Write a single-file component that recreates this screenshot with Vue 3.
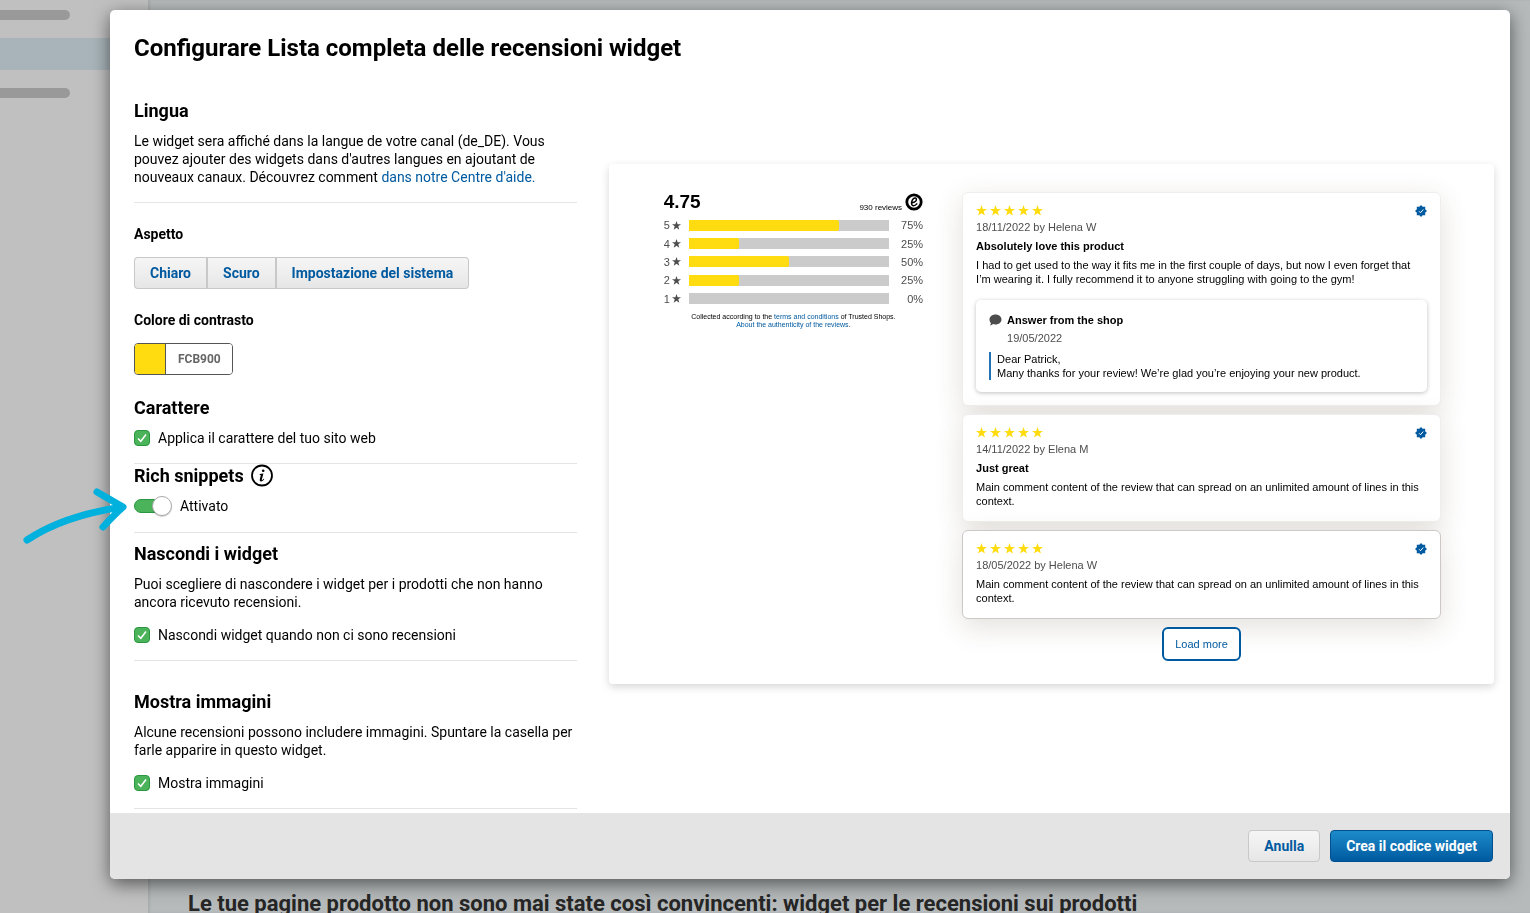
<script setup>
import { ref } from 'vue'

const aspetti = ['Chiaro', 'Scuro', 'Impostazione del sistema']
const aspetto = ref('Chiaro')
const colore = ref('FCB900')
const carattere = ref(true)
const richSnippets = ref(true)
const nascondi = ref(true)
const immagini = ref(true)

const voti = [
  { stelle: 5, percento: 75 },
  { stelle: 4, percento: 25 },
  { stelle: 3, percento: 50 },
  { stelle: 2, percento: 25 },
  { stelle: 1, percento: 0 },
]

const recensioni = [
  {
    id: 1,
    autore: '18/11/2022 by Helena W',
    titolo: 'Absolutely love this product',
    testo: 'I had to get used to the way it fits me in the first couple of days, but now I even forget that I’m wearing it. I fully recommend it to anyone struggling with going to the gym!',
    risposta: {
      data: '19/05/2022',
      saluto: 'Dear Patrick,',
      testo: 'Many thanks for your review! We’re glad you’re enjoying your new product.',
    },
  },
  {
    id: 2,
    autore: '14/11/2022 by Elena M',
    titolo: 'Just great',
    testo: 'Main comment content of the review that can spread on an unlimited amount of lines in this context.',
  },
  {
    id: 3,
    autore: '18/05/2022 by Helena W',
    testo: 'Main comment content of the review that can spread on an unlimited amount of lines in this context.',
    attiva: true,
  },
]
</script>

<template>
  <div class="pagina">
    <aside class="laterale">
      <span class="voce"></span>
      <span class="voce-attiva"></span>
      <span class="voce"></span>
    </aside>
    <main class="contenuto">
      <h1>Le tue pagine prodotto non sono mai state così convincenti: widget per le recensioni sui prodotti</h1>
    </main>
  </div>

  <div class="sfondo">
    <section class="modale" role="dialog" aria-labelledby="titolo-modale">
      <h2 id="titolo-modale" class="titolo-modale">Configurare Lista completa delle recensioni widget</h2>

      <div class="corpo">
        <div class="impostazioni">
          <section class="gruppo">
            <h3>Lingua</h3>
            <p>
              Le widget sera affiché dans la langue de votre canal (de_DE). Vous pouvez ajouter des widgets dans
              d'autres langues en ajoutant de nouveaux canaux. Découvrez comment
              <a href="#">dans notre Centre d'aide.</a>
            </p>
          </section>

          <section class="gruppo aspetto">
            <h4>Aspetto</h4>
            <div class="segmenti">
              <button v-for="voce in aspetti" :key="voce" type="button" @click="aspetto = voce">{{ voce }}</button>
            </div>

            <h4><label for="colore">Colore di contrasto</label></h4>
            <div class="colore">
              <span class="campione"></span>
              <input id="colore" v-model="colore" type="text" maxlength="6" />
            </div>

            <h3>Carattere</h3>
            <label class="opzione">
              <input v-model="carattere" type="checkbox" />
              Applica il carattere del tuo sito web
            </label>
          </section>

          <section class="gruppo">
            <h3 class="con-icona">
              Rich snippets
              <svg width="24" height="24" viewBox="0 0 24 24">
                <circle cx="12" cy="11.5" r="10" fill="none" stroke="#000" stroke-width="1.8" />
                <circle cx="13.2" cy="6.8" r="1.3" />
                <path d="M9.7 10.1 13.4 9.5 11.9 15.3Q11.600 16.400 12.200 16.200 12.900 15.800 13.600 14.800L14.200 15.200Q12.700 17.600 11 17.600 9.200 17.600 9.800 15.300L10.800 11.200Q10.900 10.700 9.600 10.700Z" />
              </svg>
            </h3>
            <label class="interruttore">
              <input v-model="richSnippets" type="checkbox" role="switch" />
              Attivato
            </label>
          </section>

          <section class="gruppo nascondi">
            <h3>Nascondi i widget</h3>
            <p>Puoi scegliere di nascondere i widget per i prodotti che non hanno ancora ricevuto recensioni.</p>
            <label class="opzione">
              <input v-model="nascondi" type="checkbox" />
              Nascondi widget quando non ci sono recensioni
            </label>
          </section>

          <section class="gruppo immagini">
            <h3>Mostra immagini</h3>
            <p>Alcune recensioni possono includere immagini. Spuntare la casella per farle apparire in questo widget.</p>
            <label class="opzione">
              <input v-model="immagini" type="checkbox" />
              Mostra immagini
            </label>
          </section>
        </div>

        <div class="anteprima">
          <div class="riepilogo">
            <div class="media">
              <strong>4.75</strong>
              <span class="totale">930 reviews</span>
              <svg width="18" height="18" viewBox="0 0 18 18">
                <circle cx="9" cy="9" r="7.2" fill="#fff" stroke="#000" stroke-width="2.8" />
                <path d="M7.3 9.8C9.8 9.2 11.6 7.8 11.4 6.1 11.2 4.2 8.6 4.7 7.3 7.2 6 9.8 6.4 12.5 8.3 12.7 9.7 12.8 10.9 12 11.8 10.9" fill="none" stroke="#000" stroke-width="1.5" stroke-linecap="round" />
              </svg>
            </div>
            <div class="voti">
              <div v-for="voto in voti" :key="voto.stelle" class="voto">
                <span class="numero">
                  {{ voto.stelle }}
                  <svg width="9" height="9" viewBox="0 0 24 24">
                    <path d="M12 0 15 8.6 24 8.9 16.8 14.3 19.4 23 12 17.9 4.6 23 7.2 14.3 0 8.9 9 8.6Z" fill="#4d4d4d" />
                  </svg>
                </span>
                <span class="barra"><span class="pieno" :style="{ width: voto.percento + '%' }"></span></span>
                <span class="percento">{{ voto.percento }}%</span>
              </div>
            </div>
            <p class="note">
              Collected according to the <a href="#">terms and conditions</a> of Trusted Shops.<br />
              <a href="#">About the authenticity of the reviews</a>.
            </p>
          </div>

          <div class="recensioni">
            <article v-for="r in recensioni" :key="r.id" class="recensione" :class="{ attiva: r.attiva }">
              <div class="testata">
                <span class="stelle">
                  <svg v-for="n in 5" :key="n" width="11" height="11" viewBox="0 0 24 24">
                    <path d="M12 0 15 8.6 24 8.9 16.8 14.3 19.4 23 12 17.9 4.6 23 7.2 14.3 0 8.9 9 8.6Z" fill="#ffdc0f" />
                  </svg>
                </span>
                <svg width="12" height="12" viewBox="0 0 24 24">
                  <path d="M12 0 15.4 3.700 20.500 3.500 20.300 8.600 24 12 20.300 15.400 20.500 20.500 15.400 20.300 12 24 8.600 20.300 3.500 20.500 3.700 15.400 0 12 3.700 8.600 3.500 3.500 8.600 3.700Z" fill="#005aa0" />
                  <path d="m8 12.500 3 3 5.500-6.500" fill="none" stroke="#fff" stroke-width="2" />
                </svg>
              </div>
              <p class="autore">{{ r.autore }}</p>
              <h5 v-if="r.titolo">{{ r.titolo }}</h5>
              <p class="testo">{{ r.testo }}</p>
              <div v-if="r.risposta" class="risposta">
                <div class="risposta-titolo">
                  <svg width="13" height="12" viewBox="0 0 26 24">
                    <path d="M13 1C20 1 25 5.300 25 11S20 21 13 21C11 21 9.500 20.700 8 20.200 6.500 21.800 4.300 22.800 2 23 3.200 21.500 3.800 19.700 3.700 18 2 16.200 1 13.700 1 11 1 5.300 6 1 13 1Z" fill="#4d4d4d" />
                  </svg>
                  <h5>Answer from the shop</h5>
                </div>
                <p class="risposta-data">{{ r.risposta.data }}</p>
                <blockquote>{{ r.risposta.saluto }}<br />{{ r.risposta.testo }}</blockquote>
              </div>
            </article>
            <button type="button" class="altre">Load more</button>
          </div>
        </div>
      </div>

      <footer class="azioni">
        <button type="button" class="secondario">Anulla</button>
        <button type="button" class="primario">Crea il codice widget</button>
      </footer>
    </section>
  </div>

  <!-- freccia che indica l'interruttore -->
  <svg class="freccia" width="112" height="62" viewBox="0 0 112 62">
    <path d="M7 55C31 39 62 28 102 22M77 7 103 22Q94 30 83 42" fill="none" stroke="#00b0dd" stroke-width="7" stroke-linecap="round" stroke-linejoin="round" />
  </svg>
</template>

<style>
body {
  margin: 0;
  overflow: hidden;
}
</style>

<style scoped>
* {
  box-sizing: border-box;
}

h1,
h2,
h3,
h4,
h5,
p,
blockquote {
  margin: 0;
}

button,
input {
  font-family: inherit;
}

a {
  color: #005aa0;
  text-decoration: none;
}

svg {
  flex: none;
}

.pagina {
  display: flex;
  height: 100vh;
  font-family: Roboto, sans-serif;
}

.laterale {
  display: flex;
  flex-direction: column;
  gap: 18px;
  flex: none;
  width: 148px;
  padding-top: 10px;
  background: #c0c0c0;
}

.voce {
  width: 70px;
  height: 10px;
  border-radius: 0 5px 5px 0;
  background: #999;
}

.voce-attiva {
  height: 32px;
  background: #a8b4b9;
}

.contenuto {
  flex: 1;
  padding: calc(100vh - 23px) 40px 0;
  background: #b6babb;
  box-shadow: inset 2px 0 2px #a9adae;
}

.contenuto h1 {
  font-size: 22px;
  font-weight: 700;
  line-height: 28px;
  white-space: nowrap;
  color: #262626;
}

.sfondo {
  position: fixed;
  inset: 0;
  display: flex;
  padding: 10px 20px 34px 110px;
  font-family: Roboto, sans-serif;
  font-size: 14px;
  line-height: 18px;
  color: #000;
}

.modale {
  display: flex;
  flex-direction: column;
  flex: 1;
  border-radius: 5px;
  background: #fff;
  box-shadow: 0 5px 18px rgba(0, 0, 0, 0.55);
  overflow: hidden;
}

.titolo-modale {
  padding: 22px 24px 20px;
  font-size: 24px;
  font-weight: 700;
  line-height: 32px;
}

.corpo {
  display: grid;
  grid-template-columns: 1fr 2fr;
  gap: 32px;
  flex: 1;
  align-items: start;
  min-height: 0;
  padding: 15px 16px 0 24px;
}

.gruppo {
  display: flex;
  flex-direction: column;
  align-items: flex-start;
  padding-bottom: 16px;
  border-bottom: 1px solid #e4e4e4;
}

.gruppo h3 {
  margin-bottom: 9px;
  font-size: 18px;
  font-weight: 700;
  line-height: 24px;
}

.gruppo h4 {
  margin-bottom: 13px;
  font-size: 14px;
  font-weight: 700;
  line-height: 20px;
}

.aspetto {
  padding-top: 21px;
}

.nascondi {
  padding-top: 9px;
}

.immagini {
  padding-top: 29px;
}

.gruppo p + .opzione {
  margin-top: 15px;
}

.segmenti {
  display: flex;
  margin-bottom: 21px;
}

.segmenti button,
.secondario {
  height: 32px;
  padding: 0 15px;
  border: 1px solid #c8c8c8;
  background: linear-gradient(#f6f6f6, #e6e6e6);
  font-size: 14px;
  font-weight: 700;
  color: #005aa0;
}

.segmenti button:first-child {
  border-right: 0;
  border-radius: 4px 0 0 4px;
}

.segmenti button + button {
  border-left-width: 2px;
}

.segmenti button:nth-child(2) {
  border-right: 0;
}

.segmenti button:last-child {
  border-radius: 0 4px 4px 0;
}

.colore {
  display: flex;
  width: 99px;
  height: 32px;
  margin-bottom: 21px;
  border: 1px solid #555;
  border-radius: 4px;
  overflow: hidden;
}

.campione {
  flex: none;
  width: 31px;
  border-right: 1px solid #555;
  background: #ffdc0f;
}

.colore input {
  min-width: 0;
  flex: 1;
  padding: 0 0 0 12px;
  border: 0;
  font-size: 12px;
  font-weight: 700;
  color: #666;
}

.opzione,
.interruttore {
  display: flex;
  align-items: center;
  gap: 8px;
}

.opzione input {
  width: 16px;
  height: 16px;
  margin: 0;
  border: 1px solid #2a9641;
  border-radius: 4px;
  background: #4bb45a;
  appearance: none;
}

.opzione input:checked {
  background: #4bb45a url("data:image/svg+xml,%3Csvg xmlns='http://www.w3.org/2000/svg' viewBox='0 0 14 14'%3E%3Cpath d='M3 7.500 5.800 10.300 11 3.500' fill='none' stroke='white' stroke-width='1.500'/%3E%3C/svg%3E") center / 14px no-repeat;
}

.con-icona {
  display: flex;
  align-items: center;
  gap: 6px;
}

.gruppo .con-icona {
  margin-bottom: 8px;
}

.interruttore input {
  display: flex;
  align-items: center;
  width: 38px;
  height: 20px;
  margin: 0;
  appearance: none;
}

.interruttore input::before {
  content: '';
  width: 30px;
  height: 14px;
  border: 1px solid #2a9641;
  border-radius: 7px;
  background: #4bb45a;
  box-sizing: border-box;
}

.interruttore input::after {
  content: '';
  width: 20px;
  height: 20px;
  margin-left: -12px;
  border: 1px solid #aaa;
  border-radius: 50%;
  background: #fff;
  box-shadow: 0 1px 1px rgba(0, 0, 0, 0.2);
  box-sizing: border-box;
}

.anteprima {
  display: flex;
  align-items: flex-start;
  gap: 39px;
  margin-top: 65px;
  padding: 28px 53px 23px 55px;
  border-radius: 4px;
  box-shadow: 0 3px 8px rgba(0, 0, 0, 0.16);
  font-family: "Liberation Sans", Arial, sans-serif;
  font-size: 11px;
  line-height: 14px;
}

.riepilogo {
  flex: 13;
}

.media {
  display: flex;
  align-items: center;
  height: 20px;
}

.media strong {
  flex: 1;
  font-size: 19px;
}

.totale {
  margin-right: 3px;
  padding-top: 12px;
  font-size: 8px;
}

.voti {
  display: grid;
  grid-template-rows: repeat(5, 1fr);
  height: 92px;
  margin-top: 4px;
}

.voto {
  display: flex;
  align-items: center;
  color: #4d4d4d;
}

.numero {
  display: flex;
  align-items: center;
  gap: 2px;
  width: 25px;
}

.barra {
  flex: 1;
  height: 11px;
  background: #cbcbcb;
}

.pieno {
  display: block;
  height: 100%;
  border-radius: 0 2px 2px 0;
  background: #ffdc0f;
}

.percento {
  width: 34px;
  text-align: right;
}

.note {
  margin-top: 5px;
  font-size: 7px;
  line-height: 8px;
  text-align: center;
}

.recensioni {
  display: flex;
  flex-direction: column;
  gap: 8px;
  flex: 24;
}

.recensione {
  padding: 12px 13px 13px;
  border: 1px solid #f0eeec;
  border-radius: 6px;
  background: #fff;
  box-shadow: 0 8px 28px rgba(80, 60, 40, 0.16);
}

.recensione.attiva {
  border-color: #cdc8c5;
}

.testata {
  display: flex;
  justify-content: space-between;
  height: 12px;
}

.stelle {
  display: flex;
  gap: 3px;
}

.autore {
  margin-top: 3px;
  color: #4d4d4d;
}

.recensione h5 {
  font-size: 11px;
}

.recensione > h5,
.testo {
  margin-top: 5px;
}

.risposta {
  margin-top: 14px;
  padding: 13px 13px 12px;
  border-radius: 5px;
  box-shadow: 0 1px 4px rgba(0, 0, 0, 0.25);
}

.risposta-titolo {
  display: flex;
  align-items: center;
  gap: 5px;
}

.risposta-data {
  margin: 4px 0 7px 18px;
  color: #4d4d4d;
}

.risposta blockquote {
  padding-left: 6px;
  border-left: 2px solid #2273b5;
}

.altre {
  align-self: center;
  height: 34px;
  padding: 0 11px;
  border: 2px solid #005aa0;
  border-radius: 6px;
  background: #fff;
  font-size: 11px;
  color: #005aa0;
}

.azioni {
  z-index: 1;
  display: flex;
  justify-content: flex-end;
  gap: 10px;
  padding: 17px;
  background: #e4e4e4;
}

.secondario,
.primario {
  border-radius: 4px;
}

.primario {
  height: 32px;
  padding: 0 15px;
  border: 1px solid #004f8f;
  background: linear-gradient(#1d8bc9, #005aa0);
  font-size: 14px;
  font-weight: 700;
  color: #fff;
}

.freccia {
  position: fixed;
  top: 485px;
  left: 20px;
}
</style>
